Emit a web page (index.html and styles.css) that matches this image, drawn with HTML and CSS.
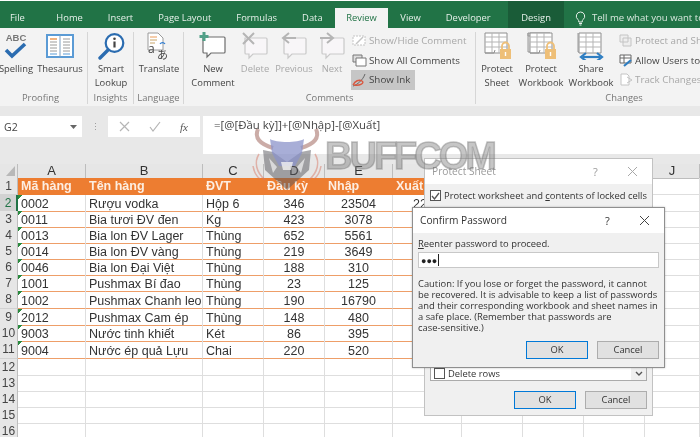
FILE: index.html
```html
<!DOCTYPE html>
<html lang="vi">
<head>
<meta charset="utf-8">
<title>Protect Sheet</title>
<link rel="stylesheet" href="styles.css">
</head>
<body>
<div class="app">
  <nav class="tabs">
    <span class="tab file">File</span><span class="tab">Home</span><span class="tab">Insert</span><span class="tab">Page Layout</span><span class="tab">Formulas</span><span class="tab">Data</span><span class="tab active">Review</span><span class="tab">View</span><span class="tab">Developer</span><span class="tab design">Design</span>
    <span class="tell"><svg width="11" height="15" viewBox="0 0 11 15"><path d="M5.500 1a4.200 4.200 0 0 0-2.600 7.500c.7.6.9 1.300.9 2.500h3.400c0-1.200.2-1.900.9-2.500A4.200 4.200 0 0 0 5.500 1zM4 12.500h3M4.500 14h2" fill="none" stroke="#e4efe8" stroke-width="1"/></svg>Tell me what you want to do</span>
  </nav>

  <section class="ribbon">
    <div class="group proofing">
      <div class="group-body">
        <div class="btn w44"><div class="ico"><svg width="30" height="30" viewBox="0 0 30 30"><text x="15" y="9" class="abc">ABC</text><path d="M5 18l6 6L24 12" fill="none" stroke="#2b6cb0" stroke-width="3.600"/></svg></div>Spelling</div>
        <div class="btn w44"><div class="ico"><svg width="30" height="28" viewBox="0 0 30 28"><path d="M2 3h26v22H2z" fill="#fff" stroke="#5b9bd5" stroke-width="2"/><path d="M15 3v22" stroke="#7f9fc0"/><path d="M5 7h7" stroke="#ed9b57" stroke-width="1.500"/><path d="M5 10h7M5 13h7M5 16h7M5 19h7M18 7h7M18 10h7M18 13h7M18 16h7M18 19h7" stroke="#9a9a9a"/><path d="M5 22h7M18 22h7" stroke="#5b9bd5"/></svg></div>Thesaurus</div>
      </div>
      <div class="group-label">Proofing</div>
    </div>
    <div class="group insights">
      <div class="group-body">
        <div class="btn w46"><div class="ico"><svg width="28" height="28" viewBox="0 0 28 28"><circle cx="17.500" cy="11" r="8.800" fill="#fff" stroke="#2b6cb0" stroke-width="2.200"/><path d="M11 18L3 26" stroke="#2b6cb0" stroke-width="3.400" stroke-linecap="round"/><circle cx="17.500" cy="6.800" r="1.300" fill="#444"/><path d="M17.500 9.500v6" stroke="#444" stroke-width="2.200"/></svg></div>Smart<br>Lookup</div>
      </div>
      <div class="group-label">Insights</div>
    </div>
    <div class="group language">
      <div class="group-body">
        <div class="btn w50"><div class="ico"><svg width="28" height="28" viewBox="0 0 28 28"><path d="M3 1h10l5 5v12H3z" fill="#fff" stroke="#9a9a9a"/><path d="M5 5h7" stroke="#ed9b57"/><path d="M5 8h7M5 11h5" stroke="#c9a66b"/><path d="M15 12a3 3 0 0 1 5 0" fill="none" stroke="#2b7cd3" stroke-width="1.200"/><text x="3" y="21" class="tr-a">a</text><text x="12" y="27" class="tr-b">あ</text></svg></div>Translate</div>
      </div>
      <div class="group-label">Language</div>
    </div>
    <div class="group comments">
      <div class="group-body">
        <div class="btn w50"><div class="ico"><svg width="30" height="28" viewBox="0 0 30 28"><path d="M5 5h21a1 1 0 0 1 1 1v14a1 1 0 0 1-1 1H13l-4 4v-4H6a1 1 0 0 1-1-1z" fill="#fff" stroke="#6d6d6d" stroke-width="1.200"/><path d="M6 0v9M1.500 4.500h9" stroke="#52a088" stroke-width="3"/></svg></div>New<br>Comment</div>
        <div class="btn w34 off"><div class="ico"><svg width="30" height="28" viewBox="0 0 30 28"><path d="M5 6h21a1 1 0 0 1 1 1v14a1 1 0 0 1-1 1H13l-4 4v-4H6a1 1 0 0 1-1-1z" fill="#f8f6f8" stroke="#c9c9c9" stroke-width="1.200"/><path d="M3 1l11 11M14 1L3 12" stroke="#b5b5b5" stroke-width="2"/></svg></div>Delete</div>
        <div class="btn w44 off"><div class="ico"><svg width="30" height="28" viewBox="0 0 30 28"><path d="M5 6h21a1 1 0 0 1 1 1v14a1 1 0 0 1-1 1H13l-4 4v-4H6a1 1 0 0 1-1-1z" fill="#f8f6f8" stroke="#c9c9c9" stroke-width="1.200"/><path d="M17 6H5M10 1L4 6l6 5" fill="none" stroke="#b5b5b5" stroke-width="2"/></svg></div>Previous</div>
        <div class="btn w32 off"><div class="ico"><svg width="30" height="28" viewBox="0 0 30 28"><path d="M5 6h21a1 1 0 0 1 1 1v14a1 1 0 0 1-1 1H13l-4 4v-4H6a1 1 0 0 1-1-1z" fill="#f8f6f8" stroke="#c9c9c9" stroke-width="1.200"/><path d="M3 6h12M10 1l6 5-6 5" fill="none" stroke="#b5b5b5" stroke-width="2"/></svg></div>Next</div>
        <div class="small-col first">
          <div class="small off"><svg width="15" height="13" viewBox="0 0 15 13"><path d="M1 2h12v9H1z" fill="#fff" stroke="#c4c4c4" stroke-dasharray="2 1"/><path d="M4 10l7-7" stroke="#c4c4c4" stroke-width="1.500"/></svg>Show/Hide Comment</div>
          <div class="small"><svg width="15" height="13" viewBox="0 0 15 13"><path d="M1 1h9v7H1z" fill="#ddd" stroke="#777"/><path d="M4 4h10v8H4z" fill="#fff" stroke="#777"/></svg>Show All Comments</div>
          <div class="small ink"><svg width="15" height="14" viewBox="0 0 15 14"><path d="M1 13C5 12 11 7 13 1" fill="none" stroke="#666"/><path d="M1 12c2-4 6-6 9-4s-2 5-8 4" fill="none" stroke="#d9573f" stroke-width="1.400"/></svg>Show Ink</div>
        </div>
      </div>
      <div class="group-label">Comments</div>
    </div>
    <div class="group changes">
      <div class="group-body">
        <div class="btn w42"><div class="ico"><svg width="30" height="28" viewBox="0 0 30 28"><use href="#sheet"/><use href="#lock"/></svg></div>Protect<br>Sheet</div>
        <div class="btn w46"><div class="ico"><svg width="30" height="28" viewBox="0 0 30 28"><path d="M2 1h22v3H2zM2 1v19h3" fill="#ddd" stroke="#999"/><use href="#sheet" x="1"/><use href="#lock" x="1"/></svg></div>Protect<br>Workbook</div>
        <div class="btn w54"><div class="ico"><svg width="30" height="28" viewBox="0 0 30 28"><path d="M2 1v19h2" fill="none" stroke="#999"/><use href="#grid"/><path d="M7 25h17" stroke="#2f7ec2" stroke-width="2.200"/><path d="M10 21l-5 4 5 4M21 21l5 4-5 4" fill="none" stroke="#2f7ec2" stroke-width="2.200"/></svg></div>Share<br>Workbook</div>
        <div class="small-col">
          <div class="small off"><svg width="14" height="13" viewBox="0 0 14 13"><path d="M1 1h8v7H1zM4 4h8v8H4z" fill="#eee" stroke="#c4c4c4"/></svg>Protect and Share Workbook</div>
          <div class="small"><svg width="14" height="13" viewBox="0 0 14 13"><path d="M1 1h11v8H1zM1 4h11M5 1v8" fill="#fff" stroke="#666"/><path d="M5 12l7-6" stroke="#2f7ec2" stroke-width="2.200"/></svg>Allow Users to Edit Ranges</div>
          <div class="small off"><svg width="14" height="13" viewBox="0 0 14 13"><path d="M2 1h6l2 2v9H2z" fill="#fff" stroke="#c4c4c4"/><path d="M8 4l5 3-5 3" fill="none" stroke="#c4c4c4"/></svg>Track Changes</div>
        </div>
      </div>
      <div class="group-label">Changes</div>
    </div>
  </section>

  <svg class="defs" width="0" height="0">
    <defs>
      <g id="grid"><path d="M3 1h22v20H3z" fill="#fff" stroke="#8f8f8f"/><path d="M3 5h22M3 10h22M3 15h22M10 1v20M17 1v20" stroke="#b5b5b5"/></g>
      <g id="sheet"><use href="#grid"/><path d="M3 21h9l1-3" fill="none" stroke="#8f8f8f"/></g>
      <g id="lock"><path d="M20 17v-3a3.500 3.500 0 0 1 7 0v3" fill="none" stroke="#eebf78" stroke-width="1.800"/><path d="M18 17h11v10H18z" fill="#eebf78"/><path d="M23.500 20v4" stroke="#fff" stroke-width="1.400"/></g>
    </defs>
  </svg>

  <section class="formula-row">
    <div class="namebox"><span>G2</span><svg width="7" height="4" viewBox="0 0 7 4"><path d="M0 0h7L3.500 4z" fill="#666"/></svg></div>
    <div class="grip">⋮</div>
    <div class="fx-box">
      <svg width="11" height="11" viewBox="0 0 11 11"><path d="M1 1l9 9M10 1l-9 9" stroke="#b5b5b5" stroke-width="1.200"/></svg>
      <svg width="12" height="11" viewBox="0 0 12 11"><path d="M1 6l3 4 7-9" fill="none" stroke="#b5b5b5" stroke-width="1.200"/></svg>
      <i class="fx">fx</i>
    </div>
    <div class="formula">=[@[Đầu kỳ]]+[@Nhập]-[@Xuất]</div>
  </section>

  <section class="sheet">
    <div class="row head">
      <div class="rh corner"><svg width="9" height="10" viewBox="0 0 9 10"><path d="M9 0v10H0z" fill="#b8b8b8"/></svg></div>
      <div class="ch">A</div><div class="ch">B</div><div class="ch">C</div><div class="ch">D</div><div class="ch">E</div><div class="ch">F</div><div class="ch">G</div><div class="ch">H</div><div class="ch">I</div><div class="ch">J</div>
    </div>
    <div class="row r1">
      <div class="rh">1</div>
      <div class="c th">Mã hàng</div><div class="c th">Tên hàng</div><div class="c th">ĐVT</div><div class="c th">Đầu kỳ</div><div class="c th">Nhập</div><div class="c th">Xuất</div><div class="c th"></div><div class="c"></div><div class="c"></div><div class="c"></div>
    </div>
    <div class="row data">
      <div class="rh sel">2</div>
      <div class="c tri">0002</div><div class="c">Rượu vodka</div><div class="c">Hộp 6</div><div class="c num">346</div><div class="c num">23504</div><div class="c num">2250</div><div class="c"></div><div class="c plain"></div><div class="c plain"></div><div class="c plain"></div>
    </div>
    <div class="row data">
      <div class="rh">3</div>
      <div class="c tri">0011</div><div class="c">Bia tươi ĐV đen</div><div class="c">Kg</div><div class="c num">423</div><div class="c num">3078</div><div class="c num"></div><div class="c"></div><div class="c plain"></div><div class="c plain"></div><div class="c plain"></div>
    </div>
    <div class="row data">
      <div class="rh">4</div>
      <div class="c tri">0013</div><div class="c">Bia lon ĐV Lager</div><div class="c">Thùng</div><div class="c num">652</div><div class="c num">5561</div><div class="c num"></div><div class="c"></div><div class="c plain"></div><div class="c plain"></div><div class="c plain"></div>
    </div>
    <div class="row data">
      <div class="rh">5</div>
      <div class="c tri">0014</div><div class="c">Bia lon ĐV vàng</div><div class="c">Thùng</div><div class="c num">219</div><div class="c num">3649</div><div class="c num"></div><div class="c"></div><div class="c plain"></div><div class="c plain"></div><div class="c plain"></div>
    </div>
    <div class="row data">
      <div class="rh">6</div>
      <div class="c tri">0046</div><div class="c">Bia lon Đại Việt</div><div class="c">Thùng</div><div class="c num">188</div><div class="c num">310</div><div class="c num"></div><div class="c"></div><div class="c plain"></div><div class="c plain"></div><div class="c plain"></div>
    </div>
    <div class="row data">
      <div class="rh">7</div>
      <div class="c tri">1001</div><div class="c">Pushmax Bí đao</div><div class="c">Thùng</div><div class="c num">23</div><div class="c num">125</div><div class="c num"></div><div class="c"></div><div class="c plain"></div><div class="c plain"></div><div class="c plain"></div>
    </div>
    <div class="row data tall">
      <div class="rh">8</div>
      <div class="c tri">1002</div><div class="c">Pushmax Chanh leo</div><div class="c">Thùng</div><div class="c num">190</div><div class="c num">16790</div><div class="c num"></div><div class="c"></div><div class="c plain"></div><div class="c plain"></div><div class="c plain"></div>
    </div>
    <div class="row data">
      <div class="rh">9</div>
      <div class="c tri">2012</div><div class="c">Pushmax Cam ép</div><div class="c">Thùng</div><div class="c num">148</div><div class="c num">480</div><div class="c num"></div><div class="c"></div><div class="c plain"></div><div class="c plain"></div><div class="c plain"></div>
    </div>
    <div class="row data">
      <div class="rh">10</div>
      <div class="c tri">9003</div><div class="c">Nước tinh khiết</div><div class="c">Két</div><div class="c num">86</div><div class="c num">395</div><div class="c num"></div><div class="c"></div><div class="c plain"></div><div class="c plain"></div><div class="c plain"></div>
    </div>
    <div class="row data tall">
      <div class="rh">11</div>
      <div class="c tri">9004</div><div class="c">Nước ép quả Lựu</div><div class="c">Chai</div><div class="c num">220</div><div class="c num">520</div><div class="c num"></div><div class="c"></div><div class="c plain"></div><div class="c plain"></div><div class="c plain"></div>
    </div>
    <div class="row"><div class="rh">12</div><div class="c plain"></div><div class="c plain"></div><div class="c plain"></div><div class="c plain"></div><div class="c plain"></div><div class="c plain"></div><div class="c plain"></div><div class="c plain"></div><div class="c plain"></div><div class="c plain"></div></div>
    <div class="row"><div class="rh">13</div><div class="c plain"></div><div class="c plain"></div><div class="c plain"></div><div class="c plain"></div><div class="c plain"></div><div class="c plain"></div><div class="c plain"></div><div class="c plain"></div><div class="c plain"></div><div class="c plain"></div></div>
    <div class="row"><div class="rh">14</div><div class="c plain"></div><div class="c plain"></div><div class="c plain"></div><div class="c plain"></div><div class="c plain"></div><div class="c plain"></div><div class="c plain"></div><div class="c plain"></div><div class="c plain"></div><div class="c plain"></div></div>
    <div class="row"><div class="rh">15</div><div class="c plain"></div><div class="c plain"></div><div class="c plain"></div><div class="c plain"></div><div class="c plain"></div><div class="c plain"></div><div class="c plain"></div><div class="c plain"></div><div class="c plain"></div><div class="c plain"></div></div>
    <div class="row"><div class="rh">16</div><div class="c plain"></div><div class="c plain"></div><div class="c plain"></div><div class="c plain"></div><div class="c plain"></div><div class="c plain"></div><div class="c plain"></div><div class="c plain"></div><div class="c plain"></div><div class="c plain"></div></div>
  </section>

  <div class="dialog protect">
    <header class="dlg-title inactive"><span class="dlg-name">Protect Sheet</span><span class="help">?</span><svg width="11" height="11" viewBox="0 0 11 11"><path d="M1 1l9 9M10 1l-9 9" stroke="#a8a8a8" stroke-width="1"/></svg></header>
    <div class="protect-body">
      <label class="check-row"><span class="box checked"><svg width="9" height="8" viewBox="0 0 9 8"><path d="M1 4l2.500 3L8 1" fill="none" stroke="#555" stroke-width="1.300"/></svg></span><span>Protect worksheet and <u>c</u>ontents of locked cells</span></label>
      <div class="list"><span class="box"></span><span class="list-text">Delete rows</span><span class="list-arrow"><svg width="8" height="5" viewBox="0 0 8 5"><path d="M1 1l3 3 3-3" fill="none" stroke="#555" stroke-width="1.400"/></svg></span></div>
      <div class="actions"><span class="push primary">OK</span><span class="push">Cancel</span></div>
    </div>
  </div>

  <div class="dialog confirm">
    <header class="dlg-title"><span class="dlg-name">Confirm Password</span><span class="help">?</span><svg width="11" height="11" viewBox="0 0 11 11"><path d="M1 1l9 9M10 1l-9 9" stroke="#444" stroke-width="1"/></svg></header>
    <div class="confirm-body">
      <div class="prompt"><u>R</u>eenter password to proceed.</div>
      <div class="pass"><span class="dots">●●●</span><span class="caret"></span></div>
      <p class="caution">Caution: If you lose or forget the password, it cannot<br>be recovered. It is advisable to keep a list of passwords<br>and their corresponding workbook and sheet names in<br>a safe place.  (Remember that passwords are<br>case-sensitive.)</p>
      <div class="actions"><span class="push primary">OK</span><span class="push">Cancel</span></div>
    </div>
  </div>

  <div class="watermark">
    <svg width="74" height="66" viewBox="0 0 74 66">
      <path d="M8 3c-4 9 2 15 15 19M66 3c4 9-2 15-15 19" fill="none" stroke="#a9756c" stroke-width="4" opacity=".6"/>
      <path d="M13 24l10 2 14 10 14-10 10-2-2 20-22 20-22-20z" fill="#55555c" opacity=".5"/>
      <path d="M20 13c6 4 28 4 34 0l-2 14-7 13H29l-7-13z" fill="#8b93c9" opacity=".75"/>
      <path d="M31 36h12l-2 8h-8z" fill="#f1f1f1" opacity=".8"/>
      <path d="M19 32l8 9-4 6zM55 32l-8 9 4 6z" fill="#f2f2f2" opacity=".7"/>
      <path d="M9 28c-5 8-3 18 6 26M65 28c5 8 3 18-6 26M3 40c1 6 3 10 7 13M71 40c-1 6-3 10-7 13" fill="none" stroke="#d77a68" stroke-width="1.500" opacity=".5"/>
    </svg>
    <span class="brand">BUFFCOM</span>
  </div>
</div>
</body>
</html>
```
FILE: styles.css
```css
* { box-sizing: border-box; }
html, body { margin: 0; padding: 0; background: #fff; }
.app {
  position: relative;
  width: 700px;
  height: 437px;
  overflow: hidden;
  font-family: "Open Sans", "Noto Sans", sans-serif;
  font-size: 9.4px;
  color: #444;
  filter: blur(0.4px);
}
.defs { display: block; height: 0; }

/* Tabs */
.tabs {
  display: flex;
  align-items: stretch;
  height: 27px;
  margin-top: 1px;
  padding-top: 7px;
  background: #217346;
  color: #e6f0ea;
  white-space: nowrap;
  line-height: 20px;
  font-size: 9.4px;
}
.tab { padding: 0 12.5px; }
.tab.file { padding: 0 10px; margin-right: 9px; }
.tab.active { background: #f3f3f3; color: #217346; padding: 0 11px; }
.tab.design { background: #1a5c38; padding: 7px 13px 0; margin-top: -7px; margin-left: 5px; }
.tell { display: flex; align-items: center; gap: 2px; margin-left: 11px; color: #d9e8df; font-size: 9.6px; }
.tell svg { margin-right: 4px; }

/* Ribbon */
.ribbon {
  display: flex;
  height: 78px;
  padding: 4px 0 2px;
  background: #f3f3f3;
  overflow: hidden;
}
.group {
  display: flex;
  flex-direction: column;
  flex: none;
  border-right: 1px solid #d6d6d6;
}
.proofing { width: 94px; margin-left: -6px; }
.insights { width: 46px; }
.language { width: 50px; }
.comments { width: 292px; }
.changes { width: 296px; border-right: 0; }
.group-body { display: flex; height: 60px; }
.comments .group-body { padding-left: 4px; }
.group-label { height: 12px; line-height: 12px; text-align: center; color: #777; white-space: nowrap; }
/* every slot overhangs by 5px per side, so a label wider than its slot stays centred */
.btn {
  flex: none;
  margin: 0 -5px;
  text-align: center;
  line-height: 14px;
  white-space: nowrap;
}
.ico { display: flex; justify-content: center; align-items: flex-start; height: 30px; }
.w32 { width: 42px; } .w34 { width: 44px; } .w42 { width: 52px; } .w44 { width: 54px; }
.w46 { width: 56px; } .w50 { width: 60px; } .w54 { width: 64px; }
.off { color: #a8a8a8; }
.abc { font: bold 9.5px "Liberation Sans", sans-serif; fill: #777; text-anchor: middle; }
.tr-a { font: 12px "Open Sans", sans-serif; fill: #444; }
.tr-b { font: 11px "Noto Sans CJK JP", sans-serif; fill: #444; }
.small-col { display: flex; flex-direction: column; margin-top: -1px; white-space: nowrap; }
.small-col.first { margin-left: 3px; }
.small { display: flex; align-items: center; gap: 2px; height: 19.5px; padding-left: 1px; font-size: 9.8px; }
.ink { background: #c6c6c6; width: 64px; }

/* Formula row */
.formula-row {
  display: flex;
  height: 58px;
  padding-top: 10px;
  background: #e8e8e8;
  align-items: flex-start;
}
.namebox {
  display: flex;
  align-items: center;
  justify-content: space-between;
  width: 82px;
  height: 21px;
  padding: 0 5px 0 4px;
  background: #fff;
  font-size: 10.5px;
}
.grip { width: 26px; height: 21px; line-height: 21px; text-align: center; color: #999; }
.fx-box {
  display: flex;
  align-items: center;
  gap: 19px;
  width: 92px;
  height: 21px;
  padding-left: 11px;
  background: #fff;
}
.fx { font: italic 11px "Liberation Serif", serif; color: #555; }
.formula {
  flex: 1;
  height: 38px;
  margin-left: 3px;
  padding: 2px 0 0 11px;
  background: #fff;
  font-size: 11.4px;
  line-height: 14px;
  white-space: nowrap;
}

/* Sheet */
.sheet { background: #fff; font-family: "Liberation Sans", Arial, sans-serif; font-size: 12.5px; color: #333; }
.row {
  display: grid;
  grid-template-columns: 18px 68px 117px 61px 61px 68px 69px 61px 61px 61px 55px;
  height: 16px;
}
.row.tall { height: 18px; }
.row.head { height: 14px; background: #e6e6e6; }
.row.r1 { height: 17px; }
.rh {
  background: #e6e6e6;
  border-right: 1px solid #bdbdbd;
  border-bottom: 1px solid #d2d2d2;
  text-align: center;
  line-height: 16px;
  font-size: 12px;
  color: #444;
  white-space: nowrap;
}
.rh.sel { background: #d2d2d2; color: #217346; border-right: 2px solid #217346; }
.corner { display: flex; justify-content: flex-end; align-items: flex-end; padding: 0 2px 2px 0; }
.ch { border-right: 1px solid #bdbdbd; border-bottom: 1px solid #bdbdbd; text-align: center; line-height: 14px; font-size: 13px; }
.c {
  display: flex;
  align-items: flex-end;
  padding-left: 3px;
  border-right: 1px solid #dedede;
  border-bottom: 1px solid #ee9e68;
  line-height: 14px;
  white-space: nowrap;
  overflow: hidden;
}
.r1 .c { border-bottom-color: #dedede; }
.c.th { background: #ed7d31; color: #fdeee2; font-weight: bold; border-color: #ed7d31; padding-bottom: 1px; }
.c.num { justify-content: center; padding-left: 0; }
.c.plain { border-bottom-color: #dedede; }
.c.tri { background: linear-gradient(135deg, #2a8a3e 3.5px, transparent 3.5px); }

/* Dialogs */
.dialog {
  position: absolute;
  display: flex;
  flex-direction: column;
  background: #f0f0f0;
  color: #333;
}
.protect { left: 424px; top: 158px; width: 229px; height: 258px; border: 1px solid #c2c2c2; }
.confirm { left: 412px; top: 207px; width: 253px; height: 161px; border: 1px solid #8f8f8f; box-shadow: 0 0 2px rgba(0,0,0,.25); }
.dlg-title {
  display: flex;
  align-items: center;
  flex: none;
  height: 25px;
  padding: 0 14px 1px 7px;
  background: #fff;
  font-size: 10.2px;
}
.dlg-name { flex: 1; }
.help { width: 34px; font-size: 11px; }
.inactive { color: #9a9a9a; }
.protect-body { display: flex; flex-direction: column; flex: 1; padding: 5px 5px 6px 5px; }
.check-row { display: flex; align-items: center; gap: 3px; height: 13px; white-space: nowrap; }
.box {
  display: flex;
  align-items: center;
  justify-content: center;
  flex: none;
  width: 11px;
  height: 11px;
  background: #fff;
  border: 1px solid #555;
}
.list {
  display: flex;
  align-items: center;
  gap: 3px;
  height: 15px;
  margin-top: auto;
  padding-left: 3px;
  background: #fff;
  border: 1px solid #ababab;
}
.list-text { flex: 1; }
.list-arrow { display: flex; align-items: center; justify-content: center; width: 15px; height: 13px; background: #f0f0f0; }
.actions { display: flex; justify-content: flex-end; gap: 9px; }
.protect .actions { margin-top: 10px; }
.push {
  width: 62px;
  height: 18px;
  background: #e1e1e1;
  border: 1px solid #adadad;
  text-align: center;
  line-height: 16px;
}
.push.primary { border: 1.5px solid #0078d7; }
.confirm-body { padding: 4px 5px 0; }
.prompt { line-height: 14px; }
.pass {
  display: flex;
  align-items: center;
  height: 16px;
  margin-top: 1px;
  padding-left: 2px;
  background: #fff;
  border: 1px solid #c8c8c8;
  font-size: 9px;
  color: #222;
}
.caret { width: 1px; height: 12px; margin-left: 1px; background: #222; }
.caution { margin: 10px 0 8px; line-height: 11px; white-space: nowrap; }

/* Watermark */
.watermark {
  position: absolute;
  left: 250px;
  top: 126px;
  display: flex;
  align-items: flex-start;
  pointer-events: none;
}
.brand {
  margin: 11px 0 0 1px;
  font: bold 38px/38px "Liberation Sans", sans-serif;
  letter-spacing: -3px;
  color: rgba(120, 120, 120, .42);
  -webkit-text-stroke: 1.5px rgba(120, 120, 120, .42);
}
```
